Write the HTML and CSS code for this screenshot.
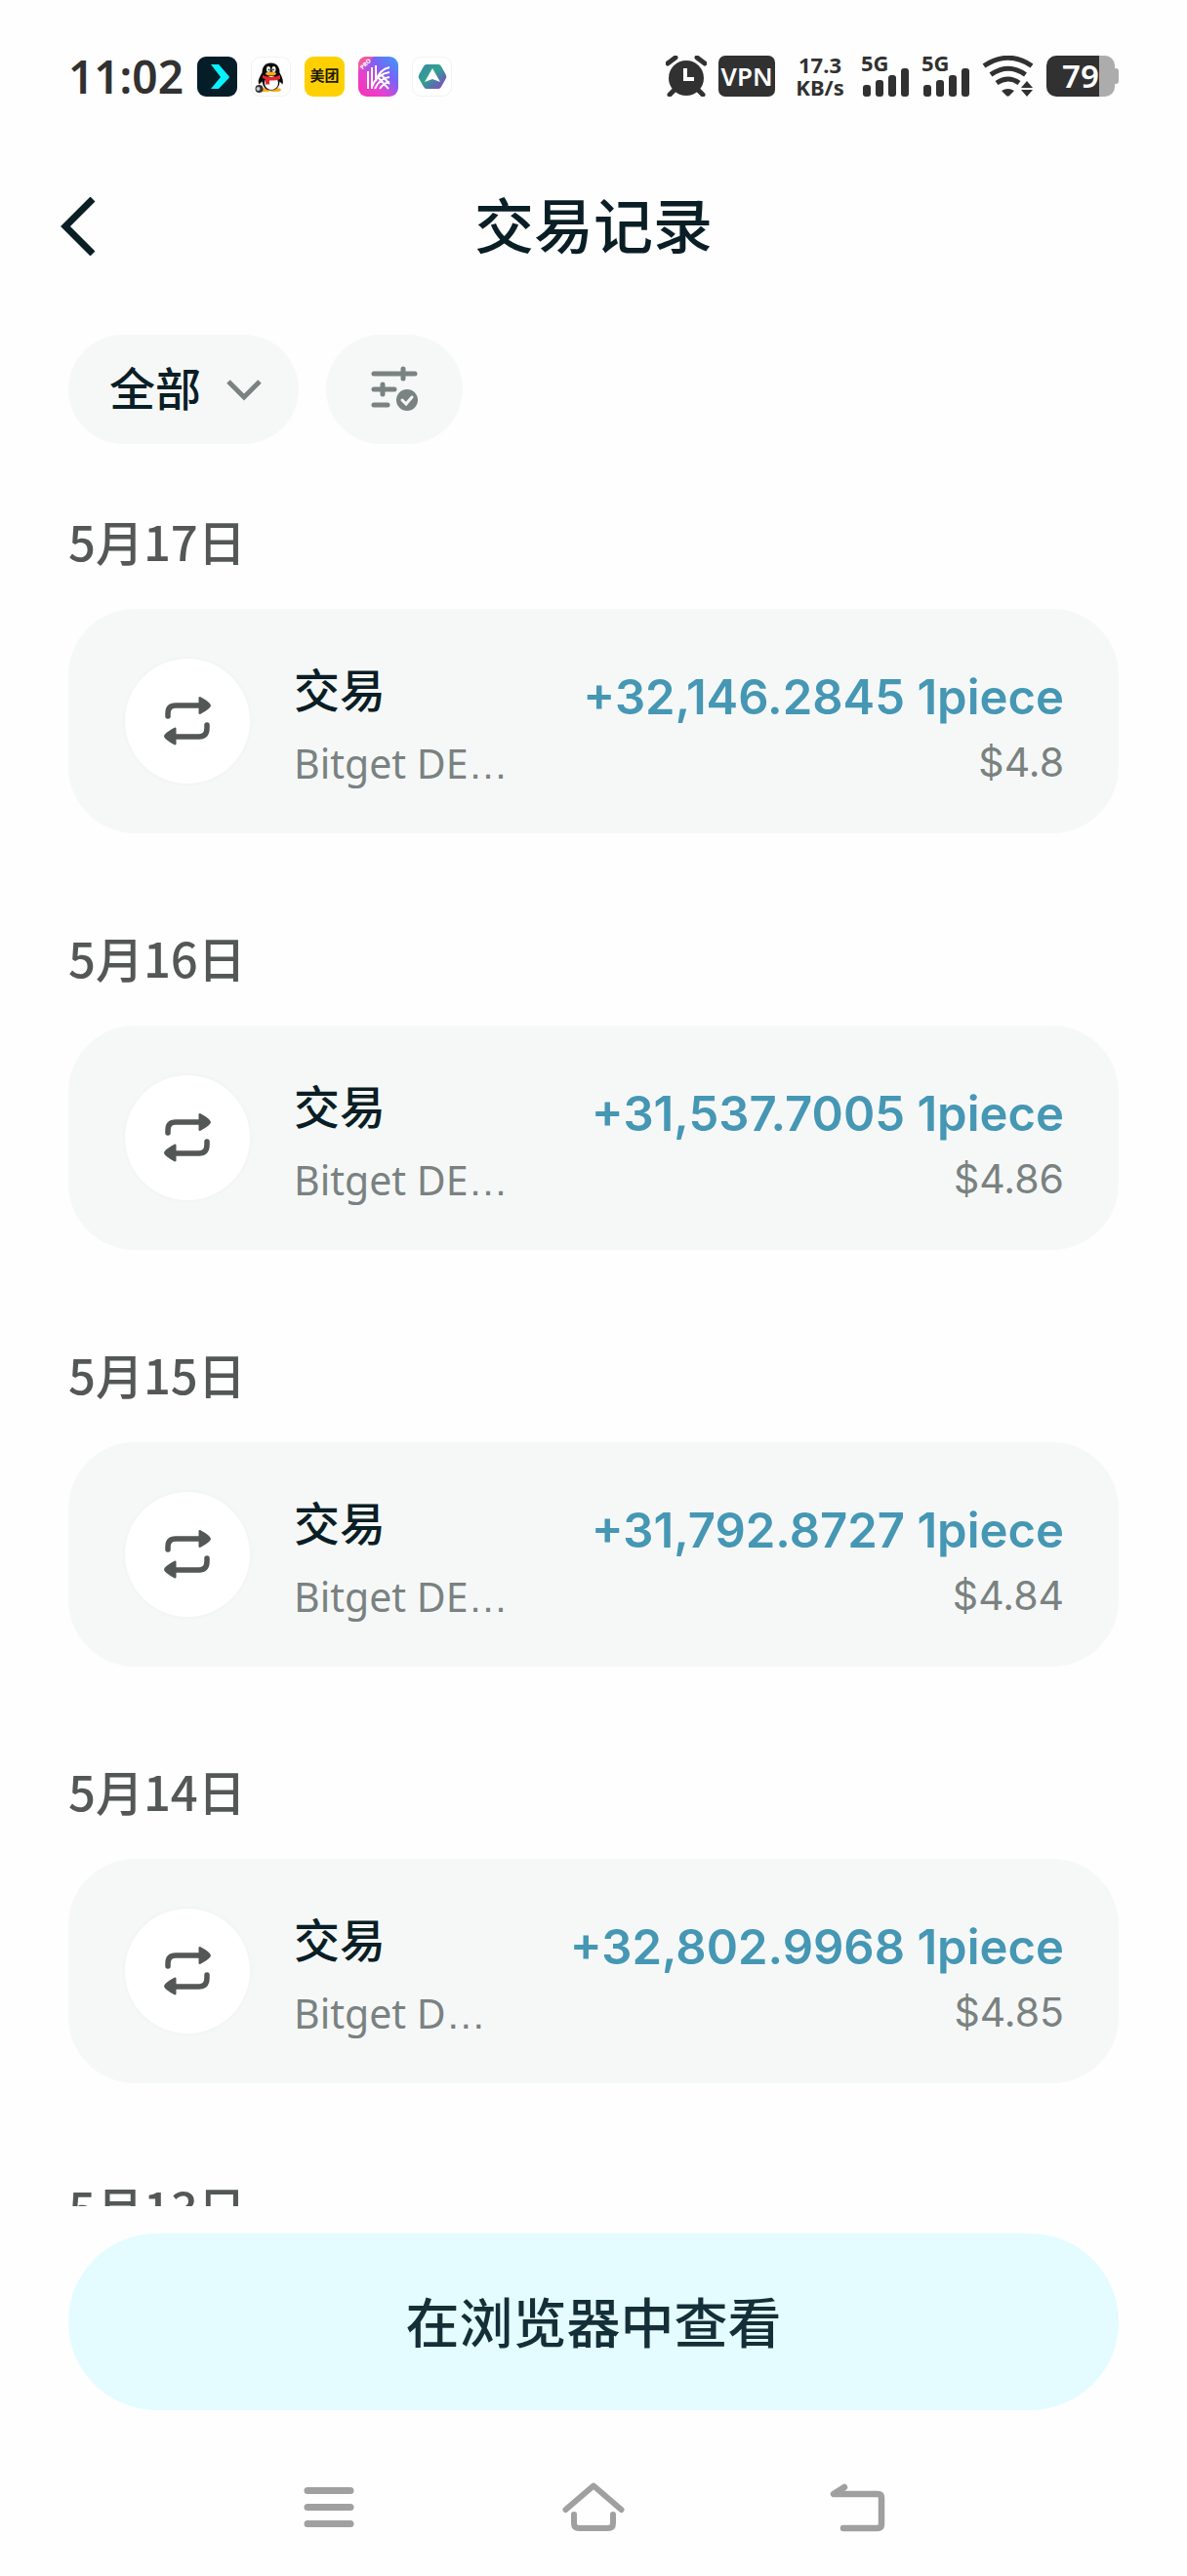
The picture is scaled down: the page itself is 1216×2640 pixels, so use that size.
FILE: index.html
```html
<!DOCTYPE html>
<html lang="zh-CN">
<head>
    <meta charset="UTF-8">
    <meta name="viewport" content="width=device-width, initial-scale=1.0">
    <title>交易记录</title>
    <link rel="stylesheet" href="styles.css">
</head>
<body>
    <svg class="defs" aria-hidden="true">
        <symbol id="swap" viewBox="0 0 50 50">
            <path d="M5 20v-3q0-8 8-8h26M45 29v3q0 9-8 9H11" fill="none" stroke="currentColor" stroke-width="5.500" stroke-linecap="round"/>
            <path d="M38 0q11 6 11 9t-11 9q-1.500 0-1.500-1V1q0-1 1.500-1zM12 31.500q-11 6-11 9t11 9q1.500 0 1.500-1v-16q0-1-1.500-1z" fill="currentColor"/>
        </symbol>
        <symbol id="signal" viewBox="0 0 50 42">
            <rect x="2" y="30" width="8" height="12" rx="3"/>
            <rect x="15" y="25" width="8" height="17" rx="3"/>
            <rect x="28" y="20" width="8" height="22" rx="3"/>
            <rect x="41" y="13" width="8" height="29" rx="3"/>
        </symbol>
    </svg>

    <div class="status-bar">
        <div class="status-left">
            <span class="clock">11:02</span>
            <svg class="app-icon" viewBox="0 0 41 41">
                <rect width="41" height="41" rx="9" fill="#051d27"/>
                <path d="M14 8h8l10.500 12q1 1 0 2L22 33h-8l10-12z" fill="#07f2fc"/>
            </svg>
            <svg class="app-icon" viewBox="0 0 41 41">
                <rect x=".5" y=".5" width="40" height="40" rx="9" fill="#fff" stroke="#f1f2f2"/>
                <ellipse cx="15" cy="34" rx="6" ry="2" fill="#f4ac19"/>
                <ellipse cx="25" cy="34" rx="6" ry="2" fill="#f4ac19"/>
                <path d="M20.500 6.500c-6 0-9 4-9 10-3 5-5 9-3 12l3-3c1 6 4 9 9 9s9-3 9-9l3 3c1-3 0-7-3-12 0-6-3-10-9-10z" fill="#0b0a0b"/>
                <ellipse cx="21" cy="27" rx="7" ry="7" fill="#fff"/>
                <ellipse cx="18" cy="13" rx="2" ry="3" fill="#fff"/>
                <ellipse cx="23.500" cy="13" rx="2" ry="3" fill="#fff"/>
                <circle cx="18.500" cy="13.500" r="1"/>
                <circle cx="23" cy="13.500" r="1"/>
                <ellipse cx="20.500" cy="17.500" rx="5.500" ry="2" fill="#f4ac19"/>
                <path d="M12 19q9 4 18 0v4q-5 2-11 1.500v4h-4v-5l-3-1.500z" fill="#e5252c"/>
                <circle cx="8.500" cy="33" r="4" fill="#343434"/>
                <circle cx="7.500" cy="33" r="2" fill="#c8c8c8"/>
            </svg>
            <span class="app-icon meituan">美团</span>
            <svg class="app-icon" viewBox="0 0 41 41">
                <defs>
                    <linearGradient id="kc" x1="0" y1="1" x2="1" y2="0">
                        <stop offset="0" stop-color="#fb2fb0"/>
                        <stop offset=".35" stop-color="#e641d2"/>
                        <stop offset=".65" stop-color="#7764f4"/>
                        <stop offset="1" stop-color="#3c9cff"/>
                    </linearGradient>
                </defs>
                <rect width="41" height="41" rx="9" fill="url(#kc)"/>
                <path d="M0 15V9q0-9 9-9h7z" fill="#f05b9d"/>
                <path d="M10 15v18M14 11v22M18 9v15M18 25Q22 13 32 11M14 31Q19 18 32 16M17 33Q22 22 32 21M22 33Q26 27 32 26M20 21l11 12M24 19l8 9" fill="none" stroke="#fff" stroke-width="2"/>
                <text class="pro" text-anchor="middle" transform="translate(9 9) rotate(-45)">PRO</text>
            </svg>
            <svg class="app-icon" viewBox="0 0 41 41">
                <defs>
                    <linearGradient id="hex" x1="0" y1="0" x2="1" y2="1">
                        <stop offset="0" stop-color="#3c86a8"/>
                        <stop offset=".45" stop-color="#30a38e"/>
                        <stop offset=".7" stop-color="#596fae"/>
                        <stop offset="1" stop-color="#9543b8"/>
                    </linearGradient>
                </defs>
                <rect x=".5" y=".5" width="40" height="40" rx="9" fill="#fff" stroke="#f1f2f2"/>
                <path d="M15 8h12q2 0 3 2l4.500 8q1.500 2.500 0 5L30 31q-1 2-3 2H15q-2 0-3-2l-4.500-8q-1.500-2.500 0-5L12 10q1-2 3-2z" fill="url(#hex)"/>
                <path d="M21 12l8 14-8-3-8 3z" fill="#fff"/>
            </svg>
        </div>

        <div class="status-right">
            <svg class="alarm" viewBox="0 0 42 42">
                <circle cx="21" cy="23" r="18"/>
                <path d="M2 8l8-6M40 8l-8-6M9 35l-5 5M33 35l5 5" stroke="#313131" stroke-width="5" stroke-linecap="round"/>
                <path d="M20 13v11h9" fill="none" stroke="#fff" stroke-width="4"/>
            </svg>
            <span class="vpn">VPN</span>
            <span class="speed"><b>17.3</b><b>KB/s</b></span>
            <span class="cell"><b>5G</b><svg><use href="#signal"/></svg></span>
            <span class="cell"><b>5G</b><svg><use href="#signal"/></svg></span>
            <svg class="wifi" viewBox="0 0 54 42">
                <path d="M2 10.500Q27-6 51 10.500M9 19.500Q27 7 44.500 19.500M15 28Q27 20 38 28" fill="none" stroke="#313131" stroke-width="5"/>
                <path d="M20 36q6.500-4 13 0l-5 5q-1.500 1.500-3 0zM46 26l6 7H40zM40 35h12l-6 7z"/>
            </svg>
            <span class="battery"><span class="battery-level">79</span></span>
        </div>
    </div>

    <header class="header">
        <button class="back" aria-label="返回">
            <svg viewBox="0 0 36 60"><path d="M33 2L5 30l28 28" fill="none" stroke="currentColor" stroke-width="7"/></svg>
        </button>
        <h1>交易记录</h1>
    </header>

    <div class="filters">
        <div class="type-filter">
            <select aria-label="交易类型">
                <option>全部</option>
            </select>
            <svg viewBox="0 0 36 22"><path d="M2 2l16 16L34 2" fill="none" stroke="currentColor" stroke-width="5"/></svg>
        </div>
        <button class="more-filter" aria-label="筛选">
            <svg viewBox="0 2 48 48">
                <path d="M3 10h42M33 5v10M3 26h21M12 21v10M3 42h14" fill="none" stroke="currentColor" stroke-width="5" stroke-linecap="round"/>
                <circle cx="37" cy="37" r="11" fill="currentColor"/>
                <path d="M32 37l4 4 6-7" fill="none" stroke="#f6f8f8" stroke-width="3" stroke-linecap="round"/>
            </svg>
        </button>
    </div>

    <main class="list">
        <section class="day">
            <h2>5月17日</h2>
            <div class="card">
                <span class="card-icon"><svg><use href="#swap"/></svg></span>
                <div class="info">
                    <div class="name">交易</div>
                    <div class="source">Bitget DE<span class="dots">…</span></div>
                </div>
                <div class="value">
                    <div class="amount">+32,146.2845 1piece</div>
                    <div class="usd">$4.8</div>
                </div>
            </div>
        </section>

        <section class="day">
            <h2>5月16日</h2>
            <div class="card">
                <span class="card-icon"><svg><use href="#swap"/></svg></span>
                <div class="info">
                    <div class="name">交易</div>
                    <div class="source">Bitget DE<span class="dots">…</span></div>
                </div>
                <div class="value">
                    <div class="amount">+31,537.7005 1piece</div>
                    <div class="usd">$4.86</div>
                </div>
            </div>
        </section>

        <section class="day">
            <h2>5月15日</h2>
            <div class="card">
                <span class="card-icon"><svg><use href="#swap"/></svg></span>
                <div class="info">
                    <div class="name">交易</div>
                    <div class="source">Bitget DE<span class="dots">…</span></div>
                </div>
                <div class="value">
                    <div class="amount">+31,792.8727 1piece</div>
                    <div class="usd">$4.84</div>
                </div>
            </div>
        </section>

        <section class="day">
            <h2>5月14日</h2>
            <div class="card">
                <span class="card-icon"><svg><use href="#swap"/></svg></span>
                <div class="info">
                    <div class="name">交易</div>
                    <div class="source">Bitget D<span class="dots">…</span></div>
                </div>
                <div class="value">
                    <div class="amount">+32,802.9968 1piece</div>
                    <div class="usd">$4.85</div>
                </div>
            </div>
        </section>

        <section class="day">
            <h2>5月13日</h2>
        </section>
    </main>

    <div class="footer">
        <button class="btn-browser">在浏览器中查看</button>
    </div>

    <nav class="nav-bar">
        <button aria-label="菜单">
            <svg viewBox="0 0 64 54"><path d="M10 10.500h44M10 27.500h44M10 44.500h44" stroke-width="7"/></svg>
        </button>
        <button aria-label="主页">
            <svg viewBox="0 0 64 54"><path d="M3.500 30L32 5.500 60.500 30M12 35v9q0 5 5 5h30q5 0 5-5v-9" stroke-width="6"/></svg>
        </button>
        <button aria-label="返回上一级">
            <svg viewBox="0 0 64 54"><path d="M18 7L7 14h45q4 0 4 4v27q0 4-4 4H17" stroke-width="6.500"/></svg>
        </button>
    </nav>
</body>
</html>
```
FILE: styles.css
```css
* {
    box-sizing: border-box;
}
body {
    margin: 0;
    height: 100vh;
    display: flex;
    flex-direction: column;
    background: #fefefe;
    color: #0a1e26;
    font-family: "Noto Sans CJK SC", sans-serif;
}
button, select {
    border: none;
    padding: 0;
    background: none;
    color: inherit;
    font-family: inherit;
    cursor: pointer;
}
svg {
    display: block;
}
.defs {
    position: absolute;
    width: 0;
    height: 0;
}

/* status bar */
.status-bar {
    flex: none;
    height: 156px;
    padding: 0 70px;
    display: flex;
    justify-content: space-between;
    align-items: center;
    color: #313131;
    fill: #313131;
    font-family: "Noto Sans", sans-serif;
}
.status-left, .status-right {
    display: flex;
    align-items: center;
}
.status-left {
    gap: 14px;
}
.status-right {
    gap: 12px;
}
.clock {
    font-size: 46px;
    font-weight: 600;
    line-height: 56px;
}
.app-icon {
    width: 41px;
    height: 41px;
}
.meituan {
    border-radius: 9px;
    background: #ffd000;
    color: #221c05;
    font: 700 15px/38px "Noto Sans CJK SC", sans-serif;
    text-align: center;
}
.pro {
    fill: #fff;
    font-size: 6px;
    font-weight: 700;
}
.alarm {
    width: 42px;
    height: 42px;
}
.vpn {
    width: 58px;
    border-radius: 7px;
    background: #313131;
    color: #fff;
    font-size: 26px;
    font-weight: 600;
    line-height: 42px;
    text-align: center;
}
.speed {
    width: 60px;
    margin-left: 4px;
    text-align: center;
    font-size: 22px;
    line-height: 23px;
}
.speed b {
    display: block;
}
.cell {
    position: relative;
    width: 50px;
    height: 42px;
}
.cell b {
    position: absolute;
    left: 0;
    top: -4px;
    font-size: 22px;
    line-height: 22px;
}
.cell svg {
    width: 50px;
    height: 42px;
}
.wifi {
    width: 54px;
    height: 42px;
}
.battery {
    position: relative;
    width: 70px;
    height: 42px;
    margin-right: 4px;
    border-radius: 10px;
    background: linear-gradient(90deg, #313131 54px, #acacac 54px);
}
.battery::after {
    content: "";
    position: absolute;
    right: -4px;
    top: 13px;
    width: 5px;
    height: 16px;
    border-radius: 0 3px 3px 0;
    background: #acacac;
}
.battery-level {
    display: block;
    padding-left: 16px;
    color: #fff;
    font-size: 33px;
    font-weight: 600;
    line-height: 42px;
}

/* title */
.header {
    flex: none;
    height: 152px;
    padding: 0 62px;
    display: grid;
    grid-template-columns: 1fr auto 1fr;
    align-items: center;
}
.header h1 {
    margin: 0;
    padding-bottom: 6px;
    font-size: 61px;
    font-weight: 500;
    line-height: 80px;
}
.back {
    width: 36px;
    height: 60px;
}

/* filters */
.filters {
    flex: none;
    display: flex;
    gap: 28px;
    padding: 35px 70px 0;
}
.type-filter {
    position: relative;
    height: 112px;
    border-radius: 56px;
    background: #f6f8f8;
}
.type-filter select {
    appearance: none;
    height: 112px;
    padding: 0 100px 8px 42px;
    font-size: 47px;
    font-weight: 500;
}
.type-filter svg {
    position: absolute;
    right: 38px;
    top: 46px;
    width: 36px;
    height: 22px;
    color: #7a8381;
    pointer-events: none;
}
.more-filter {
    width: 140px;
    height: 112px;
    border-radius: 56px;
    background: #f6f8f8;
    color: #7a8381;
}
.more-filter svg {
    width: 48px;
    height: 48px;
    margin: 0 auto;
}

/* transactions */
.list {
    flex: 1;
    min-height: 0;
    overflow: hidden;
    padding: 71px 70px 0;
}
.day {
    margin-bottom: 99px;
}
.day h2 {
    margin: 0 0 42px;
    color: #535756;
    font-size: 49px;
    font-weight: 500;
    line-height: 56px;
}
.card {
    display: flex;
    align-items: flex-start;
    padding: 51px 56px 39px 58px;
    border-radius: 68px;
    background: #f6f8f8;
}
.card-icon {
    flex: none;
    width: 128px;
    height: 128px;
    margin-right: 45px;
    display: flex;
    justify-content: center;
    align-items: center;
    border-radius: 50%;
    background: #fff;
    box-shadow: 0 0 4px #eceff0;
    color: #535756;
}
.card-icon svg {
    width: 50px;
    height: 50px;
}
.info {
    flex: 1;
    min-width: 0;
    white-space: nowrap;
}
.name {
    margin-bottom: 14px;
    font-size: 47px;
    font-weight: 500;
    line-height: 60px;
}
.source {
    height: 66px;
    color: #7a8280;
    font-family: "Noto Sans", sans-serif;
    font-size: 41px;
    line-height: 66px;
}
.dots {
    font-family: "Liberation Sans", sans-serif;
}
.value {
    padding-top: 7px;
    font-family: Inter, sans-serif;
    line-height: 66px;
    text-align: right;
    white-space: nowrap;
}
.amount {
    color: #4597b4;
    font-size: 49px;
    font-weight: 600;
}
.usd {
    color: #7a8280;
    font-size: 41px;
}

/* bottom */
.footer {
    flex: none;
    padding: 28px 70px 0;
}
.btn-browser {
    width: 100%;
    height: 181px;
    padding-bottom: 6px;
    border-radius: 91px;
    background: #e4fcff;
    color: #142f38;
    font-size: 55px;
    font-weight: 500;
}
.nav-bar {
    flex: none;
    height: 170px;
    padding: 28px 201px 0;
    display: flex;
    justify-content: space-around;
    align-items: center;
}
.nav-bar svg {
    width: 64px;
    height: 54px;
    fill: none;
    stroke: #a0a0a0;
    stroke-linecap: round;
    stroke-linejoin: round;
}
```
